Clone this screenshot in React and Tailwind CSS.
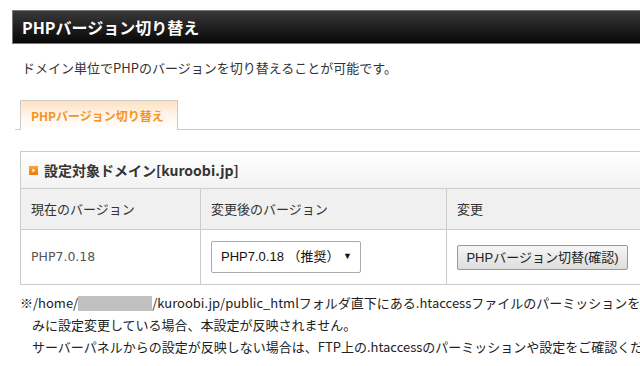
import React from "react";

const jp = "font-['Noto_Sans_CJK_JP',sans-serif]";
const arial = "font-['Liberation_Sans','Noto_Sans_CJK_JP',sans-serif]";

// 見出し横の小さなオレンジアイコン
function ArrowIcon() {
  return (
    <svg width="9" height="9" viewBox="0 0 9 9" className="shrink-0">
      <defs>
        <linearGradient id="og" x1="0" y1="0" x2="0" y2="1">
          <stop offset="0" stopColor="#ffa43a" />
          <stop offset="1" stopColor="#f07800" />
        </linearGradient>
      </defs>
      <rect x="0" y="0" width="9" height="9" fill="url(#og)" />
      <path d="M3.5 2.5 L6 4.5 L3.5 6.5 Z" fill="#fff" />
    </svg>
  );
}

export default function App() {
  return (
    <div className={`w-[640px] h-[366px] overflow-hidden bg-white ${jp}`}>
      <div className="w-[820px] pt-[10px] pl-[12px]">
        {/* タイトルバー */}
        <h1 className="h-[34px] border border-[#777] bg-gradient-to-b from-[#3a3a3a] to-[#080808] text-white font-bold text-[16px] leading-none pl-[9px] flex items-center">
          PHPバージョン切り替え
        </h1>

        <p className="mt-[14px] pl-[10px] text-[13px] leading-[20px] text-[#333]">
          ドメイン単位でPHPのバージョンを切り替えることが可能です。
        </p>

        {/* タブ */}
        <div className="mt-[22px] ml-[3px] flex border-b border-[#ccc]">
          <div className="ml-[5px] -mb-px h-[30px] w-[158px] border border-b-0 border-[#ccc] bg-gradient-to-b from-[#fde0c0] via-[#fff6ec] to-white flex items-center pl-[10px] text-[12px] font-bold text-[#f7931e] leading-none">
            PHPバージョン切り替え
          </div>
        </div>

        {/* 設定テーブル */}
        <div className="mt-[21px] ml-[8px] border border-[#ccc] text-[13px] text-[#333]">
          <div className="h-[37px] bg-gradient-to-b from-white to-[#f2f2f2] flex items-center gap-[6px] pl-[8px] border-b border-[#ccc]">
            <ArrowIcon />
            <span className="font-bold text-[14px]">設定対象ドメイン[kuroobi.jp]</span>
          </div>
          <div className="flex h-[41px] bg-[#f0f0f0] border-b border-[#ccc]">
            <div className="w-[180px] border-r border-[#ccc] flex items-center pl-[10px]">現在のバージョン</div>
            <div className="w-[246px] border-r border-[#ccc] flex items-center pl-[10px]">変更後のバージョン</div>
            <div className="flex-1 flex items-center pl-[10px]">変更</div>
          </div>
          <div className="flex h-[54px]">
            <div className="w-[180px] border-r border-[#ccc] flex items-center pl-[10px] text-[#555] font-['DejaVu_Sans',sans-serif] text-[12.5px]">PHP7.0.18</div>
            <div className="w-[246px] border-r border-[#ccc] flex items-center pl-[10px]">
              <div className={`w-[150px] h-[32px] border border-[#aaa] rounded-[2px] bg-white flex items-center justify-between pl-[9px] pr-[8px] text-[13px] text-[#111] ${arial}`}>
                <span>PHP7.0.18 （推奨）</span>
                <span className="text-[9px]">▼</span>
              </div>
            </div>
            <div className="flex-1 flex items-center pl-[10px]">
              <button className={`h-[25px] w-[171px] border border-[#999] rounded-[2px] bg-gradient-to-b from-[#f6f6f6] to-[#dddddd] text-[13px] text-[#222] leading-none ${arial}`}>
                PHPバージョン切替(確認)
              </button>
            </div>
          </div>
        </div>

        {/* 注意書き */}
        <div className="mt-[7px] ml-[8px] text-[13px] leading-[22px] text-[#222] whitespace-nowrap">
          <div>
            ※/home/<span className="inline-block w-[74px] h-[15px] bg-[#c0c0c0] align-[-3px]" />/kuroobi.jp/public_htmlフォルダ直下にある.htaccessファイルのパーミッションを読み込
          </div>
          <div className="pl-[12px]">みに設定変更している場合、本設定が反映されません。</div>
          <div className="pl-[12px]">サーバーパネルからの設定が反映しない場合は、FTP上の.htaccessのパーミッションや設定をご確認ください。</div>
        </div>
      </div>
    </div>
  );
}
